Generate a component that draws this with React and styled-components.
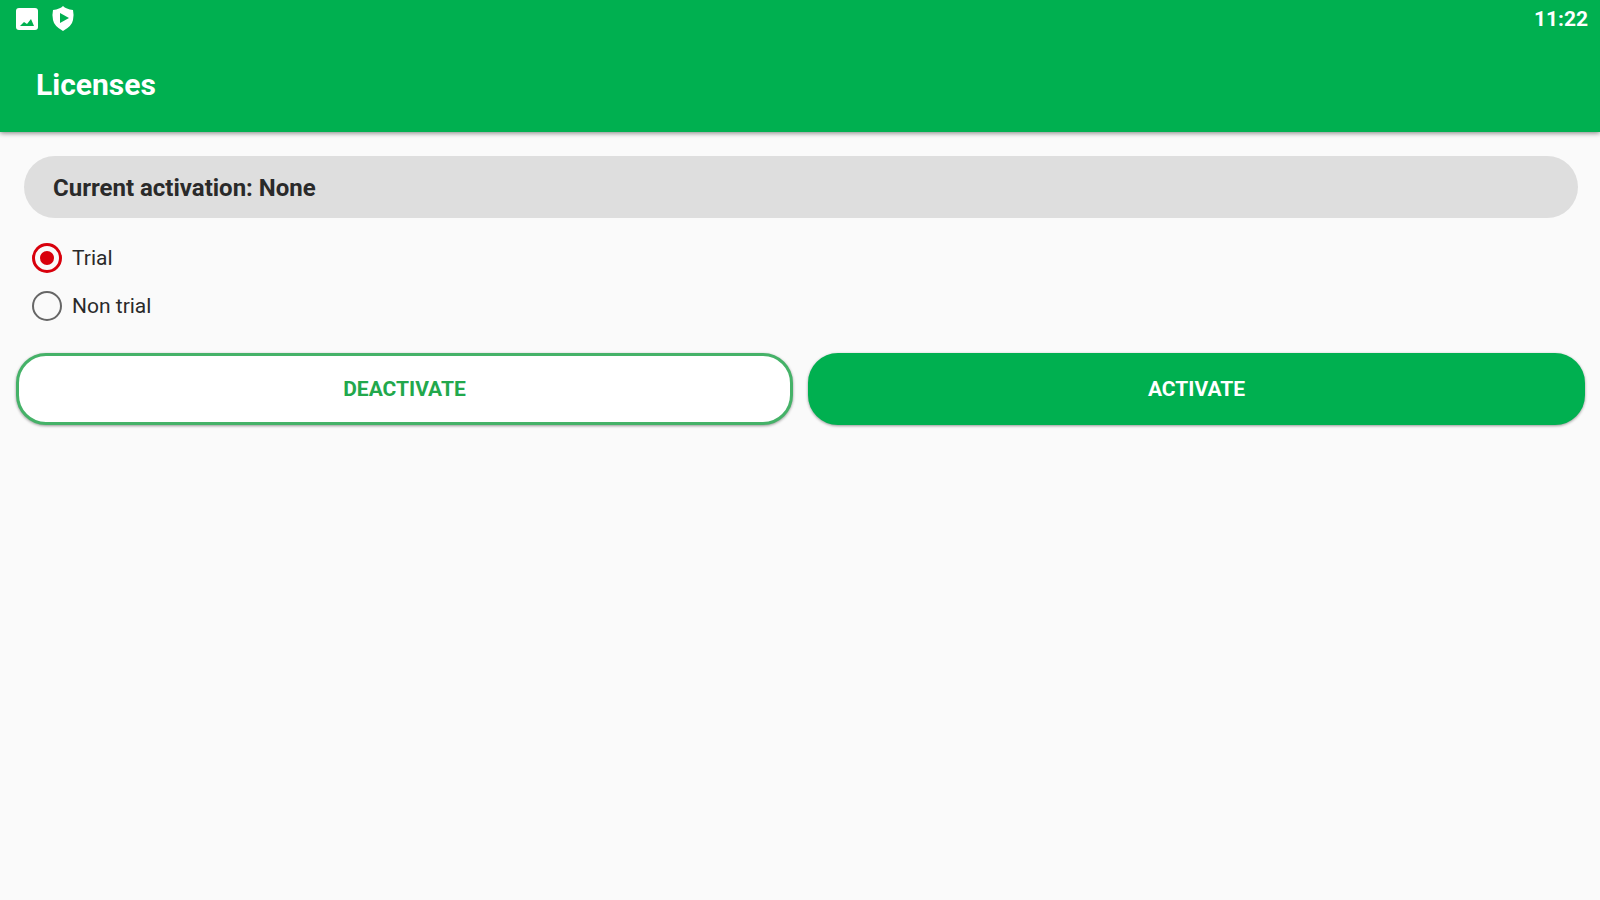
import React, { useState } from "react";
import styled, { createGlobalStyle, css } from "styled-components";

const GREEN = "#00b050";
const OUTLINE_GREEN = "#22a84c";
const RED = "#d8000c";

const GlobalStyle = createGlobalStyle`
  *, *::before, *::after { box-sizing: border-box; }
  body {
    margin: 0;
    background: #fafafa;
    color: #2a2a2a;
    font-family: Roboto, "Liberation Sans", sans-serif;
  }
`;

const Header = styled.header`
  background: ${GREEN};
  color: #fff;
  box-shadow: 0 1px 5px rgba(0, 0, 0, 0.5);
`;

const StatusBar = styled.div`
  display: flex;
  align-items: center;
  justify-content: space-between;
  height: 38px;
  padding: 0 12px 0 16px;
`;

const StatusIcons = styled.div`
  display: flex;
  align-items: center;
  gap: 14px;

  svg { display: block; }
`;

const Clock = styled.time`
  font-size: 21px;
  font-weight: 700;
  line-height: 38px;
`;

const AppBar = styled.div`
  display: flex;
  align-items: center;
  height: 94px;
  padding: 0 36px;
`;

const Title = styled.h1`
  margin: 0;
  font-size: 30px;
  font-weight: 700;
  line-height: 40px;
`;

const Content = styled.main`
  padding: 24px 15px 24px 16px;
`;

const Banner = styled.p`
  margin: 0 7px 0 8px;
  padding: 2px 29px 0;
  border-radius: 31px;
  background: #dedede;
  font-size: 24px;
  font-weight: 700;
  line-height: 60px;
`;

const Options = styled.fieldset`
  display: flex;
  flex-direction: column;
  align-items: flex-start;
  margin: 16px 0 23px;
  padding: 0 16px;
  border: 0;
`;

const Option = styled.label`
  display: flex;
  align-items: center;
  gap: 10px;
  height: 48px;
  font-size: 21px;
  line-height: 28px;
  cursor: pointer;
`;

const Radio = styled.input`
  appearance: none;
  display: grid;
  place-items: center;
  width: 30px;
  height: 30px;
  margin: 0;
  border: 2px solid #666;
  border-radius: 50%;

  &:checked { border: 3px solid ${RED}; }

  &:checked::before {
    content: "";
    width: 14px;
    height: 14px;
    border-radius: 50%;
    background: ${RED};
  }
`;

const Actions = styled.div`
  display: grid;
  grid-template-columns: 1fr 1fr;
  gap: 15px;
`;

const ActionButton = styled.button`
  height: 72px;
  border: 3px solid;
  border-radius: 30px;
  font-family: inherit;
  font-size: 21px;
  font-weight: 700;
  text-transform: uppercase;
  box-shadow: 0 1px 3px rgba(0, 0, 0, 0.4);
  cursor: pointer;
  ${({ $filled }) =>
    $filled
      ? css`border-color: ${GREEN}; background: ${GREEN}; color: #fff;`
      : css`border-color: #45b268; background: #fff; color: ${OUTLINE_GREEN};`}
`;

function ImageIcon() {
  return (
    <svg width="22" height="22" viewBox="0 0 22 22" aria-hidden="true">
      <rect width="22" height="22" rx="3" fill="#fff" />
      <path d="M4 18l4-4 3 2 4-5 3 7z" fill={GREEN} />
    </svg>
  );
}

function ShieldIcon() {
  return (
    <svg width="22" height="26" viewBox="0 0 22 26" aria-hidden="true">
      <path d="M11 0Q14 3 21 4Q22 8 21 14Q20 20 11 25Q2 20 1 14Q0 8 1 4Q8 3 11 0z" fill="#fff" />
      <path d="M8 7l9 5-9 5z" fill={GREEN} />
    </svg>
  );
}

const LICENSE_TYPES = [
  { value: "trial", label: "Trial" },
  { value: "non-trial", label: "Non trial" },
];

export default function App() {
  const [license, setLicense] = useState("trial");

  return (
    <>
      <GlobalStyle />
      <Header>
        <StatusBar>
          <StatusIcons>
            <ImageIcon />
            <ShieldIcon />
          </StatusIcons>
          <Clock>11:22</Clock>
        </StatusBar>
        <AppBar>
          <Title>Licenses</Title>
        </AppBar>
      </Header>
      <Content>
        <Banner>Current activation: None</Banner>
        <Options aria-label="License type">
          {LICENSE_TYPES.map(({ value, label }) => (
            <Option key={value} htmlFor={value}>
              <Radio
                type="radio"
                id={value}
                name="license"
                value={value}
                checked={license === value}
                onChange={() => setLicense(value)}
              />
              {label}
            </Option>
          ))}
        </Options>
        <Actions>
          <ActionButton type="button">Deactivate</ActionButton>
          <ActionButton type="button" $filled>Activate</ActionButton>
        </Actions>
      </Content>
    </>
  );
}
